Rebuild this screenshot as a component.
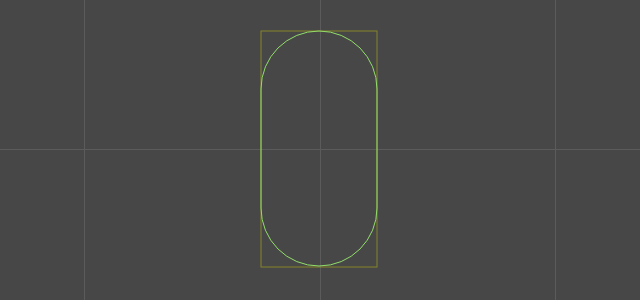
import React from 'react';

const App: React.FC = () => {
  return (
    <div className="relative w-[640px] h-[300px] overflow-hidden bg-[#474747]">
      {/* grid lines */}
      <div className="absolute top-0 left-[84px] w-px h-full bg-[#5b5b5b]" />
      <div className="absolute top-0 left-[320px] w-px h-full bg-[#5b5b5b]" />
      <div className="absolute top-0 left-[555px] w-px h-full bg-[#5b5b5b]" />
      <div className="absolute left-0 top-[149px] h-px w-full bg-[#5b5b5b]" />

      {/* capsule with selection bounds */}
      <svg className="absolute left-[260px] top-[30px]" width="120" height="240" viewBox="0 0 120 240">
        <rect x="1" y="1" width="116" height="236" fill="none" stroke="#85852a" strokeWidth="1" />
        <rect x="1" y="1" width="116" height="235" rx="58" ry="58" fill="none" stroke="#92de6a" strokeWidth="1" />
      </svg>
    </div>
  );
};

export default App;
